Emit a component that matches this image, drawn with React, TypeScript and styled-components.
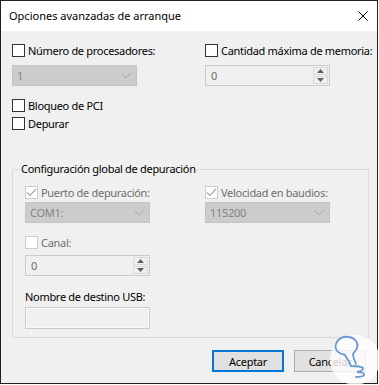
import React from 'react';
import styled, { createGlobalStyle } from 'styled-components';

const GlobalStyle = createGlobalStyle`
  html, body {
    margin: 0;
    padding: 0;
    background: #ffffff;
  }
  body {
    font-family: "Segoe UI", "Noto Sans", sans-serif;
    font-size: 11px;
    color: #000000;
  }
`;

const Page = styled.div`
  position: relative;
  width: 379px;
  height: 385px;
  overflow: hidden;
`;

const Window = styled.div`
  width: 378px;
  height: 384px;
  box-sizing: border-box;
  border: 1px solid #1f1f1f;
  display: flex;
  flex-direction: column;
  background: #f0f0f0;
`;

const TitleBar = styled.div`
  height: 30px;
  flex: none;
  background: #ffffff;
  display: flex;
  align-items: center;
  justify-content: space-between;
  padding: 0 9px 0 8px;
`;

const Title = styled.span`
  font-size: 11px;
  line-height: 16px;
`;

const Body = styled.div`
  flex: 1;
  display: flex;
  flex-direction: column;
  padding: 13px 8px 0 11px;
  letter-spacing: -0.3px;
`;

const Columns = styled.div`
  display: grid;
  grid-template-columns: ${(p: { $first: number }) => p.$first}px 1fr;
`;

const Column = styled.div`
  display: flex;
  flex-direction: column;
  align-items: flex-start;
`;

const CheckRow = styled.label<{ $disabled?: boolean; $top?: number }>`
  display: flex;
  align-items: center;
  gap: 3px;
  height: 13px;
  line-height: 13px;
  white-space: nowrap;
  margin-top: ${(p) => p.$top ?? 0}px;
  color: ${(p) => (p.$disabled ? '#6d6d6d' : '#000000')};
`;

const Box = styled.span<{ $disabled?: boolean }>`
  width: 13px;
  height: 13px;
  flex: none;
  box-sizing: border-box;
  border: 1px solid ${(p) => (p.$disabled ? '#cccccc' : '#333333')};
  background: #ffffff;
  display: flex;
  align-items: center;
  justify-content: center;
`;

const Select = styled.div<{ $top?: number }>`
  width: 125px;
  height: 21px;
  box-sizing: border-box;
  margin-top: ${(p) => p.$top ?? 0}px;
  border: 1px solid #c4c4c4;
  background: #cccccc;
  color: #838383;
  display: flex;
  align-items: center;
  justify-content: space-between;
  padding: 0 5px 0 4px;
`;

const Spinner = styled.div<{ $top?: number }>`
  width: 125px;
  height: 21px;
  box-sizing: border-box;
  margin-top: ${(p) => p.$top ?? 0}px;
  border: 1px solid #cccccc;
  background: #f0f0f0;
  color: #6d6d6d;
  display: flex;
  align-items: center;
  justify-content: space-between;
  padding-left: 5px;
`;

const SpinButtons = styled.div`
  width: 16px;
  height: 100%;
  display: flex;
  flex-direction: column;
  box-sizing: border-box;
  padding: 1px 1px 1px 0;
  gap: 1px;
`;

const SpinButton = styled.div`
  flex: 1;
  border: 1px solid #d9d9d9;
  background: #f0f0f0;
  display: flex;
  align-items: center;
  justify-content: center;
`;

const Group = styled.fieldset`
  margin: 31px 0 0 0;
  padding: 0;
  min-width: 0;
  border: 1px solid #dcdcdc;
`;

const Legend = styled.legend`
  margin-left: 7px;
  padding: 0 1px;
  line-height: 16px;
`;

const GroupInner = styled.div`
  display: flex;
  flex-direction: column;
  align-items: flex-start;
  padding: 9px 0 8px 12px;
`;

const FieldLabel = styled.div`
  margin-top: 13px;
  line-height: 15px;
`;

const TextBox = styled.div`
  width: 125px;
  height: 22px;
  margin-top: 3px;
  box-sizing: border-box;
  border: 1px solid #cccccc;
  box-shadow: inset 0 0 0 1px #f9f9f9;
  background: #f0f0f0;
`;

const ButtonRow = styled.div`
  display: flex;
  justify-content: flex-end;
  gap: 10px;
  margin: 12px 3px 0 0;
`;

const Button = styled.button<{ $primary?: boolean }>`
  width: 72px;
  height: 22px;
  box-sizing: border-box;
  font: inherit;
  letter-spacing: inherit;
  color: #000000;
  background: #e1e1e1;
  border: ${(p) => (p.$primary ? '2px solid #0078d7' : '1px solid #adadad')};
  padding: 0;
`;

const Watermark = styled.div`
  position: absolute;
  left: 330px;
  top: 335px;
  width: 50px;
  height: 50px;
  border-radius: 50%;
  background: rgba(255, 255, 255, 0.8);
`;

const Chevron = () => (
  <svg width="10" height="6" viewBox="0 0 10 6">
    <polyline points="0.5,0.5 5,5 9.5,0.5" fill="none" stroke="#a8a8a8" strokeWidth="1" />
  </svg>
);

const Check = () => (
  <svg width="11" height="11" viewBox="0 0 11 11">
    <polyline points="1,5.5 4,8.5 10,2" fill="none" stroke="#a6a6a6" strokeWidth="1.2" />
  </svg>
);

const Arrow: React.FC<{ up?: boolean }> = ({ up }) => (
  <svg width="7" height="4" viewBox="0 0 7 4">
    <polygon points={up ? '0,4 3.5,0 7,4' : '0,0 3.5,4 7,0'} fill="#606060" />
  </svg>
);

const CheckBox: React.FC<{ label: string; checked?: boolean; disabled?: boolean; top?: number }> = ({
  label,
  checked,
  disabled,
  top,
}) => (
  <CheckRow $disabled={disabled} $top={top}>
    <Box $disabled={disabled}>{checked && <Check />}</Box>
    {label}
  </CheckRow>
);

const NumberBox: React.FC<{ value: string; top?: number }> = ({ value, top }) => (
  <Spinner $top={top}>
    <span>{value}</span>
    <SpinButtons>
      <SpinButton>
        <Arrow up />
      </SpinButton>
      <SpinButton>
        <Arrow />
      </SpinButton>
    </SpinButtons>
  </Spinner>
);

const App: React.FC = () => (
  <Page>
    <GlobalStyle />
    <Window>
      <TitleBar>
        <Title>Opciones avanzadas de arranque</Title>
        <svg width="10" height="10" viewBox="0 0 10 10">
          <path d="M0.5 0.5 L9.5 9.5 M9.5 0.5 L0.5 9.5" stroke="#000" strokeWidth="1" />
        </svg>
      </TitleBar>
      <Body>
        <Columns $first={193}>
          <Column>
            <CheckBox label="Número de procesadores:" />
            <Select $top={8}>
              <span>1</span>
              <Chevron />
            </Select>
            <CheckBox label="Bloqueo de PCI" top={13} />
            <CheckBox label="Depurar" top={5} />
          </Column>
          <Column>
            <CheckBox label="Cantidad máxima de memoria:" />
            <NumberBox value="0" top={8} />
          </Column>
        </Columns>

        <Group>
          <Legend>Configuración global de depuración</Legend>
          <GroupInner>
            <Columns $first={180}>
              <Column>
                <CheckBox label="Puerto de depuración:" checked disabled />
                <Select $top={3}>
                  <span>COM1:</span>
                  <Chevron />
                </Select>
              </Column>
              <Column>
                <CheckBox label="Velocidad en baudios:" checked disabled />
                <Select $top={3}>
                  <span>115200</span>
                  <Chevron />
                </Select>
              </Column>
            </Columns>
            <CheckBox label="Canal:" disabled top={13} />
            <NumberBox value="0" top={6} />
            <FieldLabel>Nombre de destino USB:</FieldLabel>
            <TextBox />
          </GroupInner>
        </Group>

        <ButtonRow>
          <Button $primary>Aceptar</Button>
          <Button>Cancelar</Button>
        </ButtonRow>
      </Body>
    </Window>
    <Watermark>
      <svg width="50" height="50" viewBox="0 0 50 50">
        <path
          d="M15 20 C9 19 4 15 6 9 C8 3 14 1 19 2 C25 3 29 8 27 13 C26 16 24 17 23 19 C23 23 25 26 26 29 M15 20 C17 24 20 27 21 31 C25 31 31 31 33 33 C34 35 30 36 27 37 C31 37 35 38 34 40 C33 42 29 42 26 42"
          fill="none"
          stroke="#6b9bd2"
          strokeWidth="1.8"
          strokeLinecap="round"
        />
      </svg>
    </Watermark>
  </Page>
);

export default App;
